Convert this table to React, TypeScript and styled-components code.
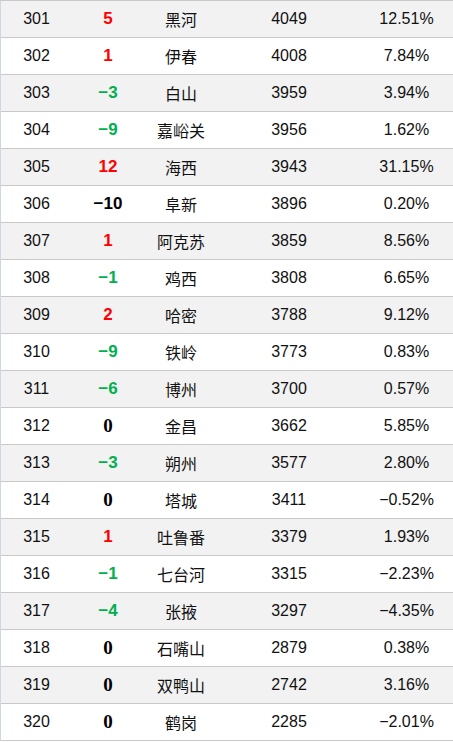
import React from 'react';
import styled, { createGlobalStyle } from 'styled-components';

const GlobalStyle = createGlobalStyle`
  html, body {
    margin: 0;
    padding: 0;
    background: #ffffff;
  }
  body {
    font-family: "Liberation Sans", Arial, "Noto Sans CJK SC", sans-serif;
    color: #111;
  }
`;

const Table = styled.div`
  width: 453px;
  border-top: 1px solid #c9c9c9;
  border-left: 1px solid #cfd6e6;
  box-sizing: border-box;
`;

const Row = styled.div<{ $shaded: boolean }>`
  display: grid;
  grid-template-columns: 71px 72px 74px 142px 93px;
  height: 36px;
  border-bottom: 1px solid #c9c9c9;
  background: ${(p) => (p.$shaded ? '#f2f2f2' : '#ffffff')};
  align-items: center;
  font-size: 16px;
`;

const Cell = styled.div`
  text-align: center;
  white-space: nowrap;
`;

const City = styled(Cell)`
  font-family: "Liberation Sans", "Noto Sans CJK SC", sans-serif;
`;

const Change = styled(Cell)<{ $v: number }>`
  font-weight: bold;
  font-size: ${(p) => (p.$v === 0 ? '19px' : '17px')};
  color: ${(p) => (p.$v > 0 ? '#ff0000' : p.$v < 0 && p.$v > -10 ? '#00b050' : '#000')};
  font-family: ${(p) =>
    p.$v === 0 ? '"Liberation Serif", "Times New Roman", serif' : '"Liberation Sans", Arial, sans-serif'};
`;

type Item = [number, number, string, number, string];

const rows: Item[] = [
  [301, 5, '黑河', 4049, '12.51%'],
  [302, 1, '伊春', 4008, '7.84%'],
  [303, -3, '白山', 3959, '3.94%'],
  [304, -9, '嘉峪关', 3956, '1.62%'],
  [305, 12, '海西', 3943, '31.15%'],
  [306, -10, '阜新', 3896, '0.20%'],
  [307, 1, '阿克苏', 3859, '8.56%'],
  [308, -1, '鸡西', 3808, '6.65%'],
  [309, 2, '哈密', 3788, '9.12%'],
  [310, -9, '铁岭', 3773, '0.83%'],
  [311, -6, '博州', 3700, '0.57%'],
  [312, 0, '金昌', 3662, '5.85%'],
  [313, -3, '朔州', 3577, '2.80%'],
  [314, 0, '塔城', 3411, '−0.52%'],
  [315, 1, '吐鲁番', 3379, '1.93%'],
  [316, -1, '七台河', 3315, '−2.23%'],
  [317, -4, '张掖', 3297, '−4.35%'],
  [318, 0, '石嘴山', 2879, '0.38%'],
  [319, 0, '双鸭山', 2742, '3.16%'],
  [320, 0, '鹤岗', 2285, '−2.01%'],
];

const fmt = (v: number) => (v < 0 ? `−${Math.abs(v)}` : `${v}`);

export default function App() {
  return (
    <>
      <GlobalStyle />
      <Table>
        {rows.map(([rank, change, city, value, pct], i) => (
          <Row key={rank} $shaded={i % 2 === 0}>
            <Cell>{rank}</Cell>
            <Change $v={change}>{fmt(change)}</Change>
            <City>{city}</City>
            <Cell>{value}</Cell>
            <Cell>{pct}</Cell>
          </Row>
        ))}
      </Table>
    </>
  );
}
